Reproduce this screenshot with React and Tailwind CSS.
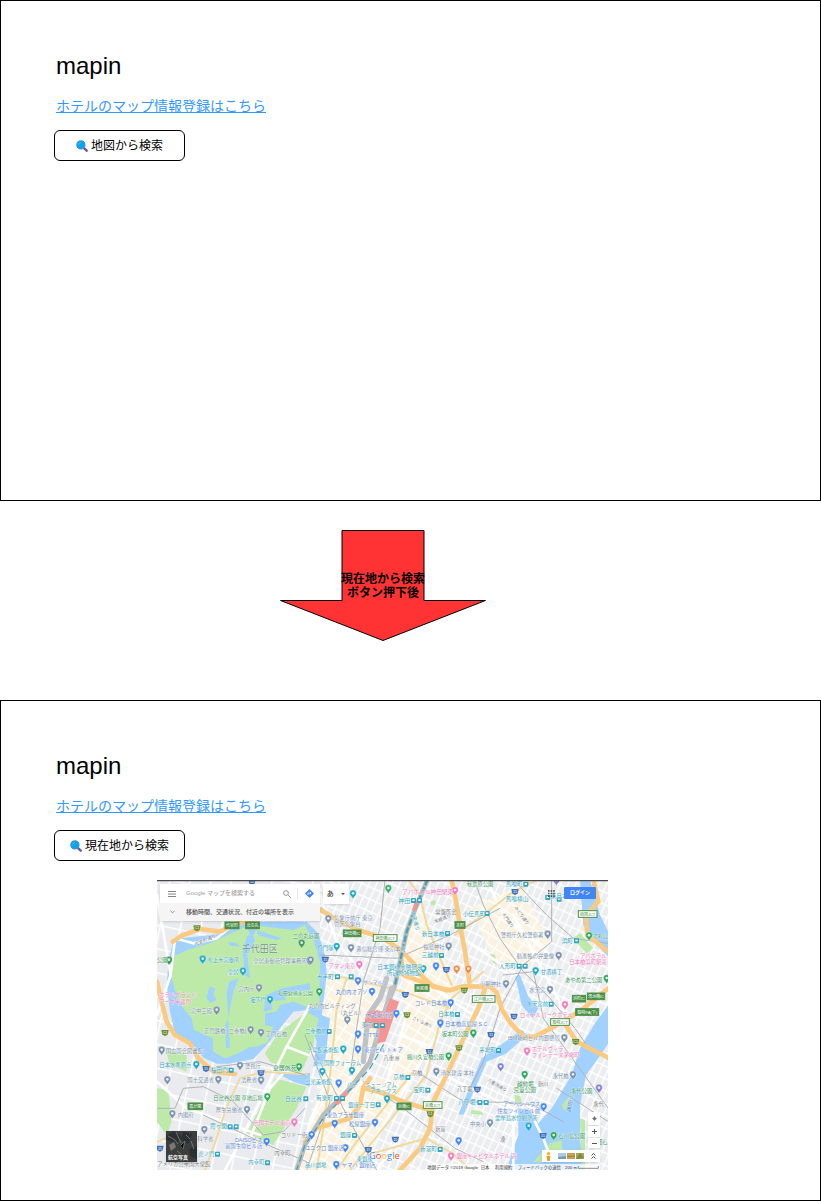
import React from 'react';

const TEAL = '#35a5c0';
const SLATE = '#7b93ad';
const BLUE = '#5b88d2';
const PINK = '#f07cba';
const GREEN = '#3c9a62';
const GRAY = '#7b7e82';

const minorStreets = [
  'M21 60 L62 300 L21 420', 'M62 300 L75 190 L130 205 L200 190 L250 150', 'M510 60 L560 200 L640 300',
  'M440 885 L475 760 L520 640', 'M480 390 L410 515 L270 800 L225 885', 'M410 515 L475 540',
  'M750 480 L830 510 M765 440 L710 620 M790 300 L1000 440', 'M620 885 L860 480 M680 885 L910 560',
  'M880 600 L1090 700 L1090 885', 'M1090 120 L1250 420', 'M940 190 L1100 300', 'M1155 740 L1180 790 L1195 830',
  'M1010 15 L1060 120 L1200 240', 'M21 620 L110 700 L330 780', 'M300 790 L360 640 L400 594',
];

const minorYellow = [
  'M165 885 L200 790 L228 700 L270 610 L340 590 L470 598', 'M775 15 L810 60 L830 150 L875 260 L905 330',
  'M500 885 L520 760 L545 560 L560 400 L590 310', 'M600 885 L700 760 L830 600 L870 440 L905 370 L1000 290',
  'M915 180 L1010 112 L1090 50 L1160 15', 'M545 300 L640 320 L760 350 L900 400', 'M560 885 L620 800 L790 590',
  'M650 840 L830 790 L915 840 L960 885', 'M21 800 L100 770',
];

const expressways = [
  'M68 200 L95 182 L150 162 L210 170 L250 150 L330 128',
  'M510 103 L560 135 L625 165 L700 190 L752 225 L790 265 L812 300 L850 335 L900 346 L940 334 L1020 335 L1040 352 L1055 402 L1080 442 L1120 485 L1155 485 L1240 440 L1300 400 L1375 340',
  'M750 225 L760 300 L820 322 L890 346', 'M1240 440 L1280 500 L1375 548',
  'M1005 340 L985 400 L945 480 L915 545 L880 620 L850 680 L840 760 L810 820 L750 885',
  'M905 15 L920 90 L930 150 L945 230 L958 320', 'M1330 15 L1345 80 L1308 120 L1312 180 L1375 230',
  'M640 638 L700 655 L760 680 L840 705', 'M640 638 L630 690 L600 730 L500 760 L465 800',
  'M21 320 L35 380 L50 440 L75 480 L120 505 L145 550 L190 590 L255 597', 'M660 610 L640 638',
];

const railways = [
  'M915 15 L975 20 L1000 90 L1050 190 L1120 290 L1200 370 L1275 460 L1310 510 L1375 555',
  'M1090 15 L1190 120 L1270 190 L1375 205', 'M1205 15 L1205 200 L1120 270 L1050 400 L1000 560 L960 640',
  'M21 700 L75 700 L100 640 L160 635 L250 680 L340 780 L400 770 L465 700', 'M705 15 L690 160 L640 320 L600 600',
  'M480 500 L600 740 L680 885', 'M640 620 L760 700 L915 820 L1000 860', 'M465 480 L540 680 L470 885',
  'M800 590 L940 680 L1070 682 L1150 690 L1240 740', 'M200 575 L330 560 L465 600', 'M1060 300 L1150 290 L1180 430 L1375 700',
  'M510 240 L740 250 L900 180 L1050 100', 'M160 720 L330 800 L470 860', 'M1220 640 L1375 740',
];

const pins = [
  [57, 257, GREEN], [158, 254, '#22a9c5'], [279, 290, '#22a9c5'], [455, 206, GREEN], [478, 258, SLATE], [144, 58, '#22a9c5', 465],
  [450, 48, PINK, 465], [70, 133, SLATE, 465], [95, 216, '#22a9c5', 465], [138, 220, SLATE, 465], [17, 257, SLATE, 465],
  [163, 270, PINK, 465], [250, 42, '#41ad70', 465], [431, 215, SLATE, 465], [355, 283, '#22a9c5', 465], [393, 275, '#4285f4', 465],
  [455, 284, '#f28b44', 465], [40, 284, '#f28b44', 915], [304, 18, '#7f82d2', 915], [278, 179, SLATE, 915], [402, 184, '#30a85d', 915],
  [311, 243, SLATE, 915], [242, 289, '#22a9c5', 915], [327, 340, SLATE], [360, 375, '#22a9c5'], [200, 407, SLATE], [302, 466, SLATE],
  [333, 474, SLATE], [35, 527, SLATE], [139, 570, '#22a9c5'], [270, 573, SLATE], [447, 577, '#30a85d'], [159, 319, '#4285f4', 465],
  [43, 352, '#30a85d', 465], [201, 351, '#4285f4', 465], [127, 436, SLATE, 465], [274, 417, '#4285f4', 465], [159, 479, '#4285f4', 465],
  [159, 524, '#4285f4', 465], [115, 524, '#22a9c5', 465], [141, 588, '#22a9c5', 465], [52, 591, '#22a9c5', 465], [437, 385, '#4285f4', 465],
  [406, 446, '#4285f4', 465], [431, 545, '#30a85d', 465], [394, 591, SLATE, 465], [153, 328, SLATE, 915], [285, 345, SLATE, 915],
  [330, 391, PINK, 915], [455, 312, '#30a85d', 915], [328, 490, SLATE, 915], [216, 530, PINK, 915], [55, 476, '#30a85d', 915],
  [137, 577, '#7f82d2', 915], [209, 600, '#30a85d', 915], [354, 601, SLATE, 915], [205, 615, SLATE], [333, 617, SLATE], [52, 616, SLATE],
  [352, 667, '#30a85d'], [291, 705, SLATE], [67, 718, SLATE], [163, 765, SLATE], [433, 743, PINK], [350, 801, '#4285f4'],
  [101, 626, '#4285f4', 465], [246, 673, '#22a9c5', 465], [89, 747, '#4285f4', 465], [210, 744, '#4285f4', 465], [20, 781, '#4285f4', 465],
  [121, 820, '#4285f4', 465], [94, 870, '#4285f4', 465], [461, 799, '#4285f4', 465], [438, 845, PINK, 465], [266, 697, '#4285f4', 915],
  [221, 755, '#22a9c5', 915], [432, 641, '#7f82d2', 915], [105, 745, SLATE, 915], [296, 783, '#30a85d', 915],
];

const labels = [
  [275, 232, '千代田区', '#6f9488', 27], [172, 262, '吹上大宮御所', TEAL], [310, 265, '皇居東御苑管理事務所', SLATE], [233, 298, '皇居', TEAL],
  [428, 188, '二の丸庭園', GREEN], [21, 262, '公園', GREEN], [136, 214, '代官町通り', GRAY, 14, -24],
  [757, 57, 'アパホテル神田駅東', PINK, 17], [745, 84, '神田', TEAL, 18], [552, 135, '気象庁前庁 東京', SLATE], [552, 152, '管区気象台', SLATE],
  [502, 225, '将門塚', TEAL], [619, 229, '逓信総合博 東京本社', SLATE], [536, 278, 'アマン東京', PINK], [682, 282, '日本銀行金融研究', TEAL, 17],
  [710, 299, '所貨幣博物館', TEAL, 17], [815, 182, '新日本橋', TEAL, 17], [820, 222, '福徳神社', SLATE], [815, 247, '三越前', TEAL, 17],
  [856, 116, '常盤医会', GRAY], [855, 145, '本銀通り', GRAY, 13, -22], [783, 110, '中央通り', TEAL, 15, 75],
  [950, 33, '秋葉原公園', GREEN, 16], [1067, 34, '馬喰町', TEAL, 17], [1067, 78, '馬喰横山', TEAL, 17], [1202, 70, '東日本橋', TEAL, 17],
  [938, 123, '小伝馬町', TEAL, 17], [1052, 185, '警視庁久松警察署', SLATE, 16], [1235, 203, '浜町', TEAL, 17], [1330, 190, '浜町公', GREEN, 14],
  [1100, 249, '勧進帳の弁慶像', SLATE], [1290, 248, 'アパホテル', PINK], [1258, 267, '日本橋浜町駅南', PINK], [1047, 279, '人形町', TEAL, 17],
  [1172, 297, '甘酒横丁', TEAL], [1055, 118, '大門通り', GRAY, 13, 54], [1093, 98, 'みどり通り', GRAY, 13, 54],
  [28, 367, 'ホテルグランド', PINK], [28, 386, 'アーク半蔵門', PINK], [265, 347, '宮内庁', SLATE], [300, 381, '坂下門', TEAL],
  [383, 359, '和田倉噴水公園', GREEN, 15], [122, 415, '宮中三殿', SLATE], [162, 473, '正門鉄橋 (二重橋)', SLATE], [347, 482, '正門石橋', SLATE],
  [47, 534, '国立国会図書館', SLATE], [28, 577, '日本水準原点', TEAL], [182, 591, '桜田門', TEAL, 17], [285, 578, '警視庁', SLATE],
  [368, 585, '皇居外苑', GREEN, 18], [500, 311, '大手町', TEAL, 17], [640, 326, 'サンマルク', BLUE, 14], [557, 358, '丸の内オアゾ', BLUE],
  [475, 399, '丸の内ビルディング', SLATE], [562, 419, '（丸ビル）', SLATE], [647, 425, '大丸東京店', BLUE],
  [635, 457, '東京', TEAL, 17], [640, 487, 'KITTE', BLUE, 17], [642, 530, '東京ビル トキア', BLUE], [700, 556, '八重洲', GRAY],
  [465, 475, '二重橋前', TEAL, 16], [470, 530, '一号館美術館', TEAL], [490, 570, '東京国際フォーラム', TEAL], [795, 390, 'コレド日本橋', BLUE],
  [865, 424, '日本橋', TEAL, 16], [885, 453, '日本橋高島屋 S.C.', BLUE, 16], [875, 484, '坂本町公園', GREEN], [770, 553, '楓川久安橋公園', GREEN],
  [872, 599, '清水建設 本社', SLATE], [785, 600, '京橋', GRAY], [785, 432, 'さくら通り', GRAY, 13, 25], [990, 334, '小網神社', SLATE],
  [1138, 350, '水天宮', SLATE], [1130, 392, '水天宮前', TEAL, 16], [1110, 426, 'ロイヤルパークホテル', PINK, 16], [1245, 320, 'あやめ第二公園', GREEN],
  [1073, 496, 'IBM箱崎ビル内郵便局', SLATE, 16], [1145, 528, 'ホテルヴィラ', PINK], [1145, 546, 'フォンテーヌ茅場町', PINK], [987, 531, '茅場町', TEAL, 17],
  [112, 622, '国土交通省', SLATE], [273, 622, '法務省', SLATE], [190, 674, '日比谷公園 草地広場', GREEN], [197, 711, '厚生労働省', SLATE],
  [83, 725, '内閣府', SLATE], [180, 760, '霞ヶ関', TEAL, 17], [310, 749, '帝国ホテル東京', PINK], [405, 677, '日比谷', TEAL, 17],
  [392, 787, 'コリドー街', GRAY], [255, 801, 'DAISOビス', BLUE], [225, 818, '富国生命ビル店', BLUE], [373, 839, '内幸町', GRAY],
  [295, 868, '内幸町', TEAL, 16], [145, 842, '虎ノ門', TEAL, 16], [22, 872, 'アメリカ合衆国大使館', GRAY], [142, 798, '科学省', SLATE],
  [465, 626, '出光美術館', TEAL], [590, 636, 'パナ', TEAL], [645, 636, 'ミュージアム', TEAL], [660, 655, 'アネックス', TEAL], [730, 613, '京橋', TEAL, 17],
  [790, 650, '宝町', TEAL, 17], [595, 695, '銀座一丁目', TEAL, 16], [498, 675, '有楽町', TEAL, 17], [530, 727, '東急プラザ銀座', BLUE],
  [597, 752, '松屋銀座', BLUE], [570, 787, '銀座', TEAL, 17], [465, 826, 'ユニクロ 銀座店', BLUE], [810, 828, '新富町', TEAL, 17],
  [855, 767, '新富', GRAY], [575, 875, 'ヤマハ 銀座店', BLUE], [465, 875, '品川劇場', TEAL], [620, 858, '東銀座', TEAL, 16],
  [1100, 632, '越前堀', GREEN, 17], [1090, 650, '児童公園', GREEN, 17], [1163, 632, '新川', GRAY], [920, 649, '八丁堀', GRAY],
  [925, 688, '八丁堀', TEAL, 17], [1060, 694, 'アーベンハウス', BLUE], [1042, 713, '住友ツインビル前', BLUE], [1035, 736, '霊岸島水位観測所', TEAL],
  [1263, 653, '永代公園', GREEN], [1330, 692, '永代', GRAY], [1208, 608, '永代橋', SLATE], [1262, 712, '隅田川', '#4b80c4', 16, -80],
  [960, 753, '中央小', SLATE], [1050, 799, '湊', GRAY], [1225, 790, '石川島公園', GREEN], [920, 849, '銀座キャピタルホテル 茜', PINK],
  [1010, 618, '八重洲通り', GRAY, 13, 30], [1341, 808, '佃石', GREEN],
];

const signs = [
  [225, 141, 42, '代官町', 1], [287, 141, 41, '北の丸', 1], [580, 165, 53, '神田橋IC', 1], [670, 179, 71, '神田橋JCT', 0], [915, 140, 30, '本町', 1],
  [1285, 107, 56, '両国JCT', 0], [795, 329, 42, '呉服橋', 1], [967, 362, 68, '江戸橋JCT', 0], [1267, 361, 40, '浜町IC', 1], [1312, 354, 52, '清洲橋IC', 1],
  [1277, 401, 69, '箱崎PA(下)', 1], [1202, 431, 56, '箱崎JCT', 0], [114, 684, 44, '霞が関', 1], [741, 684, 42, '京橋IC', 1], [820, 680, 56, '京橋JCT', 0],
];

const shields = [
  [306, 20, 0], [141, 159, 1], [526, 253, 0], [889, 284, 0], [1095, 50, 0], [45, 473, 1], [168, 581, 0], [333, 594, 0], [766, 359, 0],
  [771, 420, 1], [838, 530, 0], [927, 519, 1], [943, 346, 1], [1092, 424, 0], [1023, 479, 0], [1277, 500, 1], [30, 820, 0], [841, 717, 1],
  [736, 793, 0], [655, 824, 0], [982, 643, 0], [1179, 782, 0],
];

const stations = [
  [783, 69], [801, 69], [1120, 20], [1220, 65], [1186, 60], [1004, 108], [1272, 190], [1100, 266], [1118, 266], [236, 578], [555, 298], [596, 298],
  [671, 444], [690, 444], [530, 462], [915, 411], [1196, 380], [1038, 519], [233, 748], [251, 748], [460, 664], [552, 663], [570, 663],
  [345, 856], [195, 830], [766, 600], [826, 638], [677, 682], [606, 774], [863, 816], [982, 675], [1001, 675], [885, 168], [867, 234],
];

function Pin({ x, y, color }) {
  return (
    <g transform={`translate(${x} ${y})`}>
      <path d="M0 14 C-3 7 -10 4 -10 -3 A10 10 0 0 1 10 -3 C10 4 3 7 0 14Z" fill={color} stroke="#fff" strokeWidth="1" />
      <circle cy="-3" r="4" fill="#fff" opacity="0.85" />
    </g>
  );
}

function MapDrawing() {
  return (
    <svg viewBox="21 15 1353 870" className="block h-full w-full" role="img" aria-label="東京駅周辺の地図">
      <defs>
        <pattern id="blocks" width="42" height="34" patternUnits="userSpaceOnUse" patternTransform="rotate(24)">
          <rect width="42" height="34" fill="#ebedef" />
          <path d="M0 2H42M2 0V34M23 0V34" stroke="#fff" strokeWidth="4" />
        </pattern>
        <pattern id="blocks-west" width="60" height="70" patternUnits="userSpaceOnUse" patternTransform="rotate(12)">
          <rect width="60" height="70" fill="#e9ebee" />
          <path d="M0 2H60M2 0V70" stroke="#fff" strokeWidth="5" />
        </pattern>
        <pattern id="blocks-warm" width="32" height="28" patternUnits="userSpaceOnUse" patternTransform="rotate(32)">
          <rect width="32" height="28" fill="#fbf3e2" />
          <path d="M0 2H32M2 0V28" stroke="#fff" strokeWidth="4" />
        </pattern>
      </defs>
      <rect x="21" y="15" width="1353" height="870" fill="url(#blocks)" />
      <path d="M21 15 H510 V600 L440 885 H21Z" fill="url(#blocks-west)" />
      <path d="M530 300 L700 330 L690 450 L620 620 L790 600 L700 750 L600 885 H440 L510 650Z" fill="url(#blocks-warm)" />
      <path d="M790 60 L880 250 L920 330 L860 480 L780 620 L710 600 L770 400 L750 280Z" fill="url(#blocks-warm)" />
      <path d="M960 100 L1110 30 L1200 200 L1120 290 L1030 250Z" fill="url(#blocks-warm)" />

      <g fill="#a0d1ff">
        <path d="M68 205 L95 190 L200 178 L240 160 L258 140 H330 L470 140 L505 175 L525 240 L530 300 L515 420 L540 430 L525 560 L490 575 L500 500 L470 405 L430 410 L350 510 L310 552 L235 566 L200 566 L160 548 L122 500 L75 476 L60 410 L50 330 L56 255Z" />
        <path d="M1290 15 H1320 L1350 120 L1375 170 V245 L1340 210 L1300 150Z" />
        <path d="M1375 390 L1335 445 L1290 520 L1265 600 L1235 650 L1205 700 L1165 745 L1138 705 L1105 700 L1105 780 L1085 835 L1070 885 H1300 L1290 790 L1290 690 L1308 600 L1345 550 L1375 505Z" />
        <path d="M1110 300 L1135 365 L1165 400 L1148 430 L1115 390 L1095 300Z" />
        <path d="M1130 480 L1070 535 L1010 560 L940 720 L925 718 L995 550 L1115 465Z" />
        <path d="M380 594 H480 V635 L430 620Z" />
      </g>
      <g fill="#bdeaa9">
        <path d="M68 245 L110 226 L180 205 L250 172 L290 155 L305 190 L325 152 L430 165 L465 150 L492 200 L510 260 L508 400 L470 395 L430 380 L390 390 L380 410 L345 415 L345 450 L370 455 L352 502 L320 515 L300 515 L265 535 L225 550 L190 530 L188 490 L132 465 L125 430 L100 400 L76 350 L62 300Z" />
        <path d="M470 410 L505 430 L490 510 L450 600 L360 560 L345 535 L385 475Z" />
        <path d="M375 610 L470 635 L440 700 L370 810 L290 775Z" />
        <path d="M45 520 L110 540 L110 590 L60 570Z M21 640 L55 645 L65 740 L50 780 L21 740Z" />
        <path d="M1268 190 L1290 175 L1330 220 L1310 235Z M1245 710 L1270 650 L1235 690Z M1150 860 L1200 805 L1235 795 L1240 860Z" />
        <path d="M1095 660 L1110 662 L1118 690 L1095 680Z M965 705 L995 710 L1000 720 L962 716Z M840 80 L855 75 L858 88 L845 92Z M1290 730 L1305 735 V885 H1295Z" />
        <path d="M1020 236 L1035 240 L1040 270 L1028 260Z" />
      </g>
      <g fill="#a0d1ff">
        <path d="M178 335 L195 340 L190 360 L200 375 L180 384 L170 370Z M238 320 L265 310 L250 350 L240 400 L235 430 L230 350Z" />
        <path d="M235 430 L240 520 L228 518 L226 450Z M290 185 L305 175 L315 195 L292 240 L300 310 L285 300 L278 230Z" />
        <path d="M395 340 L480 325 V345 L410 352 L405 375 L365 378 L365 405 L340 410 L350 360Z" />
        <path d="M235 200 L262 205 L270 215 L240 212Z M320 165 L395 190 L380 196 L325 180Z" />
      </g>

      <g fill="none" strokeLinejoin="round" strokeLinecap="round">
        {minorStreets.map((d) => <path key={d} d={d} stroke="#fff" strokeWidth="8" />)}
        {minorYellow.map((d) => <path key={d} d={d} stroke="#f1da9e" strokeWidth="6" />)}
        {railways.map((d) => <path key={d} d={d} stroke="#b0b2b5" strokeWidth="3" />)}
        {expressways.map((d) => <path key={d} d={d} stroke="#f9ca80" strokeWidth="14" />)}
        <path d="M832 15 L800 90 L770 170 L750 260 L735 330 L700 420 L660 560 L600 640 L520 720 L465 810 L440 885" stroke="#b8bdc0" strokeWidth="14" />
        <path d="M710 310 L690 370 L655 420 L640 560 M725 340 L680 500" stroke="#c0c3c6" strokeWidth="16" />
        <path d="M832 15 L800 90 L770 170 L750 260 L735 330" stroke="#4ba3ac" strokeWidth="7" strokeDasharray="14 12" />
        <path d="M700 510 L660 580 L520 730 L465 810 L440 885" stroke="#4ba3ac" strokeWidth="4" strokeDasharray="18 14" />
      </g>
      <g fill="#f49593">
        <path d="M720 370 L747 380 L706 500 L682 505 L690 462 L640 456 L652 410 L682 406 L706 412Z" />
        <path d="M795 78 L806 78 L798 108 L786 104Z M585 650 L597 655 L565 690 L552 686Z" />
      </g>

      {signs.map(([x, y, width, text, filled]) => (
        <g key={text}>
          <rect x={x} y={y} width={width} height="20" fill={filled ? '#4a8f45' : '#fff'} stroke="#4a8f45" strokeWidth="3" />
          <text x={x + width / 2} y={y + 15} textAnchor="middle" fontSize="12" fill={filled ? '#fff' : '#4a8f45'}>{text}</text>
        </g>
      ))}
      {shields.map(([x, y, green]) => (
        <g key={`${x}-${y}`}>
          <path d={`M${x - 11} ${y - 8} H${x + 11} L${x + 8} ${y + 6} L${x} ${y + 10} L${x - 8} ${y + 6}Z`} fill={green ? '#688f31' : '#3f70bb'} />
          <text x={x} y={y + 4} textAnchor="middle" fontSize="11" fill="#fff">{green ? 'C1' : '15'}</text>
        </g>
      ))}
      {stations.map(([x, y]) => (
        <g key={`${x}-${y}`}>
          <rect x={x} y={y} width="15" height="15" rx="2" fill={TEAL} />
          <path d={`M${x + 4} ${y + 4} H${x + 11} V${y + 9} H${x + 4}Z`} fill="#fff" />
        </g>
      ))}
      {pins.map(([x, y, color, shift = 0]) => <Pin key={`${x}-${y}`} x={x + shift} y={y} color={color} />)}
      <g stroke="#fff" strokeWidth="2" strokeOpacity="0.7" paintOrder="stroke">
        {labels.map(([x, y, text, color, size = 16, angle = 0]) => (
          <text key={`${x}-${y}`} transform={`translate(${x} ${y}) rotate(${angle})`} fontSize={size} fill={color}>{text}</text>
        ))}
      </g>
      <g fontSize="28" fontWeight="500" stroke="#fff" strokeWidth="3" paintOrder="stroke">
        <text x="657" y="853" className="font-['Open_Sans']">
          <tspan fill="#4285f4">G</tspan><tspan fill="#ea4335">o</tspan><tspan fill="#fbbc05">o</tspan><tspan fill="#4285f4">g</tspan><tspan fill="#34a853">l</tspan><tspan fill="#ea4335">e</tspan>
        </text>
      </g>
      <rect x="830" y="867" width="520" height="18" fill="#fff" opacity="0.75" />
      <g fontSize="13" fill="#333">
        <text x="832" y="881">地図データ ©2019 Google</text>
        <text x="992" y="881">日本</text>
        <text x="1035" y="881">利用規約</text>
        <text x="1103" y="881">フィードバックの送信</text>
        <text x="1245" y="881">200 m</text>
      </g>
      <path d="M1285 873 V880 H1345 V873" fill="none" stroke="#555" strokeWidth="2" />
      <path d="M21 16.5 H1374" stroke="#48484c" strokeWidth="5" />
    </svg>
  );
}

function MapView() {
  return (
    <div className="relative mt-[19px] ml-[103px] h-[290px] w-[451px] max-w-full overflow-hidden">
      <MapDrawing />
      <div className="absolute top-1 left-[3px] w-[160px] bg-white text-[6px] shadow-sm">
        <div className="flex h-[19px] items-center">
          <button aria-label="メニュー" className="flex w-[24px] justify-center">
            <svg viewBox="0 0 8 6" className="h-[6px] w-2 text-[#777]"><path d="M0 0.5H8M0 3H8M0 5.500H8" stroke="currentColor" strokeWidth="0.9" /></svg>
          </button>
          <input aria-label="Google マップを検索する" placeholder="Google マップを検索する" className="ml-0.5 min-w-0 flex-1 font-medium outline-none placeholder:text-[#a4a4a4]" />
          <button aria-label="検索" className="flex w-5 justify-center">
            <svg viewBox="0 0 8 8" className="size-2 text-[#999]"><circle cx="3" cy="3" r="2.4" fill="none" stroke="currentColor" /><path d="M5 5L8 8" stroke="currentColor" /></svg>
          </button>
          <button aria-label="ルート" className="flex h-3 w-[23px] items-center justify-center border-l border-gray-200">
            <svg viewBox="0 0 10 10" className="size-[9px]"><path d="M5 0L10 5L5 10L0 5Z" fill="#4285f4" /><path d="M3.3 6.6V4.5H6.6M5.5 3.2L6.8 4.5L5.5 5.8" fill="none" stroke="#fff" strokeWidth="0.9" /></svg>
          </button>
        </div>
        <button className="flex h-[18px] w-full items-center bg-[#f5f5f5] text-left font-medium text-[#555]">
          <span className="mr-0.5 flex w-[24px] justify-center">
            <svg viewBox="0 0 6 4" className="h-1 w-[5px] text-[#777]"><path d="M0.5 0.5L3 3L5.5 0.5" fill="none" stroke="currentColor" /></svg>
          </span>
          移動時間、交通状況、付近の場所を表示
        </button>
      </div>
      <button aria-label="入力言語" className="absolute top-1 left-[166px] flex h-5 w-[26px] items-center justify-around bg-white text-[7px] font-medium text-[#444] shadow-sm">
        あ
        <svg viewBox="0 0 4 2" className="h-[2px] w-1"><path d="M0 0H4L2 2Z" fill="#555" /></svg>
      </button>
      <button aria-label="アプリ" className="absolute top-[10px] left-[391px]">
        <svg viewBox="0 0 8 8" className="size-[7px]"><path d="M0 1H8M0 4H8M0 7H8" stroke="#555" strokeWidth="1.8" strokeDasharray="1.8 1.2" /></svg>
      </button>
      <button className="absolute top-[7px] left-[407px] flex h-3 w-8 items-center justify-center rounded-[1px] bg-[#4285f4] text-[5px] font-bold text-white">ログイン</button>
      <button className="absolute top-[251px] left-[9px] size-[31px] overflow-hidden text-[5px] font-bold text-white shadow">
        <svg viewBox="0 0 31 31" className="size-full">
          <rect width="31" height="31" fill="#3c3e3e" />
          <path d="M0 5L8 0L16 6L11 12L0 9Z M17 1L26 3L22 13L15 9Z M23 18L31 15V28L24 25Z" fill="#2a3031" />
          <path d="M3 14L8 11L10 16L5 20Z" fill="#7d766f" />
          <path d="M2 5L9 9M10 1L15 12M15 14L19 10L17 18M20 4L24 8M25 10L28 18M11 20L15 23M8 8L12 13" stroke="#6d7575" strokeWidth="1" />
        </svg>
        <span className="absolute bottom-[1px] left-[2px] leading-[8px]">航空写真</span>
      </button>
      <button aria-label="現在地" className="absolute top-[232px] left-[431px] flex h-[13px] w-3 items-center justify-center bg-white shadow-sm">
        <svg viewBox="0 0 6 6" className="size-[5px]"><circle cx="3" cy="3" r="1.8" fill="#555" /><path d="M3 0V6M0 3H6" stroke="#777" strokeWidth="0.7" /></svg>
      </button>
      <div className="absolute top-[246px] left-[431px] grid w-3 bg-white shadow-sm">
        <button aria-label="拡大" className="flex h-[11px] items-center justify-center"><svg viewBox="0 0 5 5" className="size-[5px]"><path d="M0 2.5H5M2.5 0V5" stroke="#555" /></svg></button>
        <button aria-label="縮小" className="flex h-[11px] items-center justify-center border-t border-gray-200"><svg viewBox="0 0 5 5" className="size-[5px]"><path d="M0 2.5H5" stroke="#555" /></svg></button>
      </div>
      <div className="absolute top-[270px] left-[385px] flex h-3 w-[58px] items-center justify-between bg-white px-1 shadow-sm">
        <svg viewBox="0 0 5 9" className="h-[9px] w-[5px]"><circle cx="2.5" cy="1.8" r="1.8" fill="#f2b63c" /><path d="M0.5 4H4.5L3.7 9H1.3Z" fill="#e89b26" /></svg>
        <svg viewBox="0 0 26 6" className="h-[6px] w-[26px]">
          <path d="M0 0H8V6H0Z" fill="#a7cdea" /><path d="M0 4L8 3V6H0Z" fill="#7e9aa6" />
          <path d="M9 0H17V6H9Z" fill="#c6a052" /><path d="M9 3H17V4H9Z" fill="#a5813b" />
          <path d="M18 0H26V6H18Z" fill="#a3a956" /><path d="M18 6L22 0L26 5Z" fill="#7c8a45" />
        </svg>
        <button aria-label="画像を展開"><svg viewBox="0 0 5 6" className="h-[6px] w-[5px]"><path d="M0.5 2.5L2.5 0.5L4.5 2.5M0.5 5.5L2.5 3.5L4.5 5.5" fill="none" stroke="#555" /></svg></button>
      </div>
    </div>
  );
}

function SearchIcon() {
  return (
    <svg viewBox="0 0 12 12" className="size-3" aria-hidden="true">
      <path d="M8.300 8.300L10.700 10.700" stroke="#7652a0" strokeWidth="2.4" strokeLinecap="round" />
      <circle cx="4.9" cy="4.9" r="4.1" fill="#0ba5ec" stroke="#3f8fd0" strokeWidth="1" />
      <path d="M2.6 4.5Q3 2.8 4.7 2.6" fill="none" stroke="#56c4f5" strokeWidth="0.8" />
    </svg>
  );
}

function Screen({ action, children }) {
  return (
    <section className="flex min-h-[501px] flex-col items-start border border-black bg-white pt-[49px] pb-[30px] pl-[53px]">
      <h1 className="px-0.5 text-2xl leading-8">mapin</h1>
      <a href="#register" className="mt-[14px] ml-0.5 text-sm text-[#3399ff] underline">ホテルのマップ情報登録はこちら</a>
      <button className="mt-[14px] flex h-[31px] w-[131px] items-center justify-center gap-[3px] rounded-md border border-black bg-white text-xs">
        <SearchIcon />
        {action}
      </button>
      {children}
    </section>
  );
}

export default function App() {
  return (
    <main lang="ja" className="bg-white font-['Liberation_Sans','Noto_Sans_CJK_JP',sans-serif] text-black">
      <Screen action="地図から検索" />
      <div className="grid w-max pt-[29px] pb-[59px] pl-[280px]">
        <svg viewBox="0 0 206 111" className="col-start-1 row-start-1 h-[111px] w-[206px]" aria-hidden="true">
          <path d="M62 0.5H144V70.500H205.500L103 110.500L0.500 70.500H62Z" fill="#ff3333" stroke="#000" />
        </svg>
        <p className="z-10 col-start-1 row-start-1 self-center pt-[1px] text-center text-xs leading-[14px] font-bold">
          現在地から検索<br />ボタン押下後
        </p>
      </div>
      <Screen action="現在地から検索">
        <MapView />
      </Screen>
    </main>
  );
}
